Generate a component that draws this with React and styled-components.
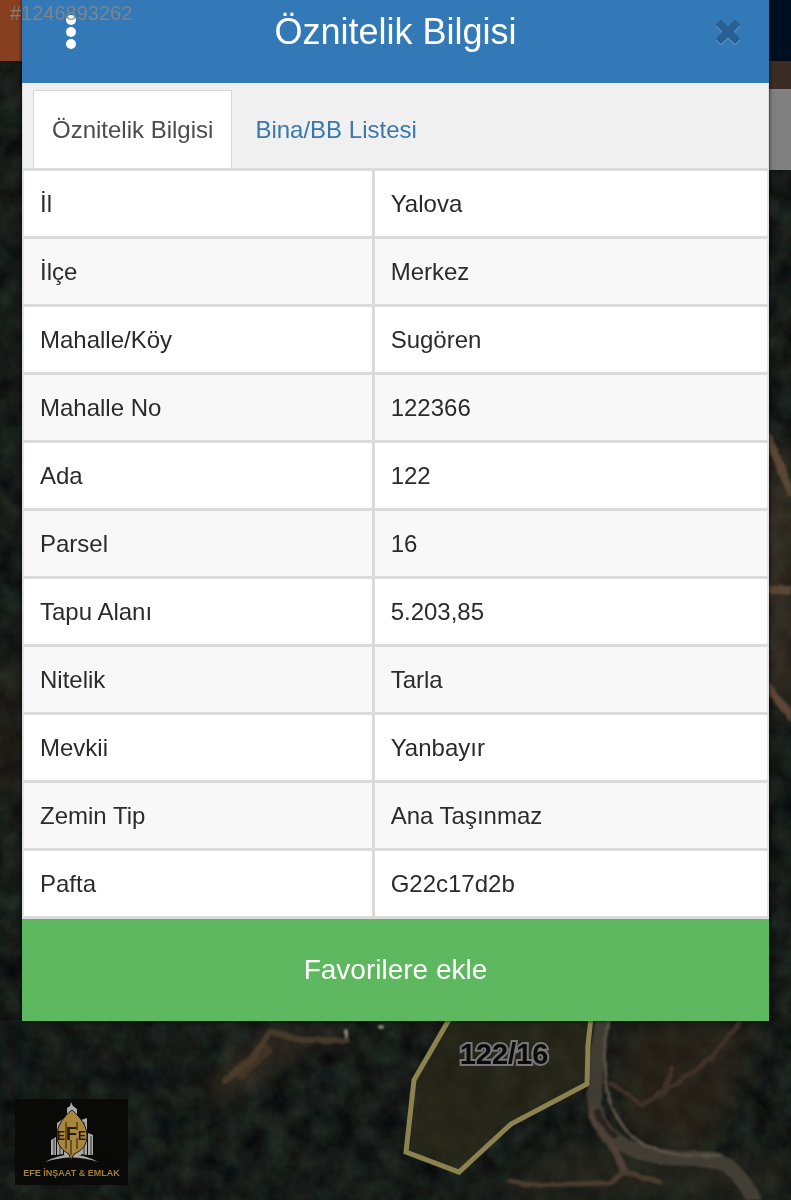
import React, { useState } from "react"
import styled, { createGlobalStyle } from "styled-components"

const GlobalStyle = createGlobalStyle`
  * {
    box-sizing: border-box;
  }
  body {
    margin: 0;
    background: #171b18;
    color: #2b2b2b;
    font-family: "Liberation Sans", Arial, sans-serif;
    font-size: 24px;
  }
`

const Page = styled.div`
  position: relative;
  min-height: 100vh;
  padding: 0 22px;
  overflow: hidden;
`

const Map = styled.svg`
  position: absolute;
  inset: 0;
  width: 100%;
  height: 100%;
`

const Modal = styled.main`
  position: relative;
  background: #fff;
  box-shadow: 0 0 4px rgba(0, 0, 0, .8);
`

const Header = styled.header`
  display: grid;
  grid-template-columns: 98px 1fr 98px;
  align-items: center;
  justify-items: center;
  height: 83px;
  padding-bottom: 19px;
  background: #3379b7;
  color: #fff;
`

const Title = styled.h1`
  margin: 0;
  font-size: 36px;
  line-height: 40px;
  font-weight: 400;
`

const IconButton = styled.button`
  display: flex;
  padding: 0;
  border: none;
  background: none;
  cursor: pointer;
  justify-self: ${p => p.$end ? 'end' : 'center'};
  margin-right: ${p => p.$end ? '26px' : '0'};
`

const Tabs = styled.nav`
  display: flex;
  gap: 4px;
  padding: 7px 10px 0;
  background: #f0f0f0;
  border-left: 1px solid #ddd;
  border-right: 1px solid #ddd;
`

const Tab = styled.button`
  height: 78px;
  padding: 0 18px;
  border: 1px solid ${p => p.$active ? '#d8d8d8' : 'transparent'};
  border-bottom: none;
  background: ${p => p.$active ? '#fff' : 'transparent'};
  color: ${p => p.$active ? '#4c4c4c' : '#3878ad'};
  font: inherit;
  cursor: pointer;
`

const Table = styled.table`
  width: 100%;
  border-collapse: collapse;
  table-layout: fixed;
  tr:nth-child(even) {
    background: #f8f8f8;
  }
  th,
  td {
    height: 68px;
    padding: 0 16px;
    border: 3px solid #dbdbdb;
    font-weight: 400;
    line-height: 32px;
    text-align: left;
  }
  th {
    width: 47%;
    border-left: 2px solid #e2e2e2;
  }
  td {
    border-right: 2px solid #e2e2e2;
  }
`

const AddButton = styled.button`
  display: block;
  width: 100%;
  height: 102px;
  border: none;
  background: #5eb85f;
  color: #fff;
  font: inherit;
  font-size: 28px;
  cursor: pointer;
`

const ListingNo = styled.span`
  position: absolute;
  top: 2px;
  left: 10px;
  color: rgba(145, 135, 128, .8);
  font-size: 20px;
  line-height: 22px;
`

const Agency = styled.figure`
  position: absolute;
  left: 15px;
  bottom: 15px;
  display: flex;
  flex-direction: column;
  align-items: center;
  width: 113px;
  height: 86px;
  margin: 0;
  padding-top: 3px;
  background: rgba(8, 8, 7, .88);
  figcaption {
    margin-top: 4px;
    color: #a17f3c;
    font-size: 9px;
    font-weight: 700;
    line-height: 10px;
    white-space: nowrap;
  }
`

const rows = [
  ['İl', 'Yalova'],
  ['İlçe', 'Merkez'],
  ['Mahalle/Köy', 'Sugören'],
  ['Mahalle No', '122366'],
  ['Ada', '122'],
  ['Parsel', '16'],
  ['Tapu Alanı', '5.203,85'],
  ['Nitelik', 'Tarla'],
  ['Mevkii', 'Yanbayır'],
  ['Zemin Tip', 'Ana Taşınmaz'],
  ['Pafta', 'G22c17d2b'],
]

function Satellite() {
  return (
    <Map viewBox="0 0 791 1200" preserveAspectRatio="xMidYMax slice" aria-hidden="true">
      <defs>
        <filter id="trees" x="0" y="0" width="100%" height="100%" colorInterpolationFilters="sRGB">
          <feTurbulence type="fractalNoise" baseFrequency=".045" numOctaves="4" seed="8" />
          <feColorMatrix values=".05 .14 0 0 -.01  0 .18 0 0 .014  0 .13 .03 0 .013  0 0 0 0 1" />
          <feGaussianBlur stdDeviation=".6" />
        </filter>
        <filter id="soft" x="-30%" y="-30%" width="160%" height="160%">
          <feGaussianBlur stdDeviation="12" />
        </filter>
        <filter id="edge" filterUnits="userSpaceOnUse" x="0" y="0" width="791" height="1200">
          <feTurbulence type="fractalNoise" baseFrequency=".08" numOctaves="2" seed="3" />
          <feDisplacementMap in="SourceGraphic" scale="4" xChannelSelector="R" yChannelSelector="G" />
          <feGaussianBlur stdDeviation="1.2" />
        </filter>
      </defs>
      <rect width="791" height="1200" fill="#161b18" />
      <rect width="791" height="1200" filter="url(#trees)" />
      {/* clearings */}
      <g filter="url(#soft)" opacity=".5">
        <path d="M200 1090L270 1030L350 1032L290 1050L240 1095Z" fill="#54402e" />
        <path d="M620 1020L760 1020L730 1110L700 1150L620 1130Z" fill="#38291f" />
        <path d="M768 430L791 480V720L768 690Z" fill="#6b5137" />
        <path d="M0 660H22V800H0Z" fill="#38291f" />
        <path d="M0 1020H20V1100H0Z" fill="#0b1417" />
        <path d="M570 1140L790 1160V1200H480Z" fill="#332e22" />
      </g>
      <path d="M450 1018L414 1080L406 1152L459 1172L511 1124L587 1084L591 1018Z" fill="#302d1b" opacity=".6" />
      {/* roads */}
      <g fill="none" strokeLinecap="round" filter="url(#edge)">
        <path d="M604 1010C597 1055 592 1095 596 1112C602 1140 640 1158 680 1158C725 1158 738 1164 758 1210" stroke="#48423b" strokeWidth="15" opacity=".85" />
        <path d="M592 1110C592 1132 617 1144 624 1170" stroke="#4e4137" strokeWidth="7" />
        <path d="M609 1015C602 1060 605 1100 618 1118C632 1145 660 1158 720 1156" stroke="#5b5248" strokeWidth="3" />
        <path d="M598 1112C601 1122 608 1130 615 1136" stroke="#2a211b" strokeWidth="6" />
        <path d="M510 1181L525 1185L610 1183L625 1172L660 1182" stroke="#4b3c2e" strokeWidth="5" />
        <path d="M612 1084L642 1105L670 1088L712 1057L740 1022M665 1088L672 1068" stroke="#40302a" strokeWidth="5" />
        <path d="M225 1080L250 1062L270 1032L300 1040L346 1040" stroke="#50402f" strokeWidth="6" opacity=".8" />
        <path d="M240 1072L265 1050" stroke="#4f3d2b" strokeWidth="14" opacity=".6" />
        <path d="M768 437L791 492M768 590H791M768 687L791 716" stroke="#5b4735" strokeWidth="8" />
        <path d="M346 1031V1036M380 1027H382" stroke="#8b8479" strokeWidth="4" />
      </g>
      <path d="M450 1018L414 1080L406 1152L459 1172L511 1124L587 1084L588 1045L591 1018" fill="none" stroke="#8b824f" strokeWidth="5" />
      <text x="504" y="1064" textAnchor="middle" fontFamily="Liberation Sans" fontSize="29" fontWeight="700" fill="#0b0b0b" stroke="#777" strokeWidth="4" paintOrder="stroke">122/16</text>
      <rect width="60" height="61" fill="#86401f" />
      <rect x="731" width="60" height="61" fill="#000f20" />
      <rect x="731" y="61" width="60" height="28" fill="#3b2c25" />
      <rect x="731" y="89" width="60" height="81" fill="#808080" />
    </Map>
  )
}

function AgencyLogo() {
  return (
    <svg width="54" height="62" viewBox="0 0 54 62" aria-hidden="true">
      <g fill="#a9a9aa">
        <path d="M22 12V6L25 4L26 0L28 4L32 7V14H22Z" />
        <path d="M6 53V38L11 35V53ZM12 53V21L18 17V52ZM36 52V18L42 16V53ZM43 53V31L48 33V53ZM19 48H36V53H19Z" />
        <path d="M0 60Q27 45 53 60Q27 51 0 60Z" />
      </g>
      <path d="M9 37V53M15 24V53M39 20V53M46 34V53" stroke="#333" />
      <path d="M27 8C36 16 42 24 42 34C42 44 36 49 29 52L26 58L24 52C17 48 12 43 12 34C12 24 18 15 27 8Z" fill="#aa863d" stroke="#171510" strokeWidth="1" />
      <path d="M21 20V47M32 20V28M32 36V47M26 38V53" stroke="#211a0c" />
      <g fontFamily="Liberation Sans" fontWeight="700" fill="#211a0c">
        <text x="12" y="38" fontSize="12">E</text>
        <text x="21" y="38" fontSize="18">F</text>
        <text x="33" y="38" fontSize="12">E</text>
      </g>
    </svg>
  )
}

export default function App() {
  const [tab, setTab] = useState('info')

  return (
    <Page>
      <GlobalStyle />
      <Satellite />
      <Modal>
        <Header>
          <IconButton aria-label="Menü">
            <svg width="12" height="36" viewBox="0 0 12 36" fill="#fff">
              <circle cx="6" cy="6" r="5" />
              <circle cx="6" cy="18" r="5" />
              <circle cx="6" cy="30" r="5" />
            </svg>
          </IconButton>
          <Title>Öznitelik Bilgisi</Title>
          <IconButton $end aria-label="Kapat">
            <svg width="30" height="30" viewBox="0 0 30 30" strokeLinejoin="round" strokeWidth="2">
              <path d="M8 5L15 12L22 5L26 9L19 16L26 23L22 27L15 20L8 27L4 23L11 16L4 9Z" fill="#6fa2cf" stroke="#6fa2cf" />
              <path d="M8 4L15 11L22 4L26 8L19 15L26 22L22 26L15 19L8 26L4 22L11 15L4 8Z" fill="#286192" stroke="#286192" />
            </svg>
          </IconButton>
        </Header>
        <Tabs>
          <Tab $active={tab === 'info'} onClick={() => setTab('info')}>Öznitelik Bilgisi</Tab>
          <Tab $active={tab === 'list'} onClick={() => setTab('list')}>Bina/BB Listesi</Tab>
        </Tabs>
        <Table>
          <tbody>
            {rows.map(([label, value]) => (
              <tr key={label}>
                <th scope="row">{label}</th>
                <td>{value}</td>
              </tr>
            ))}
          </tbody>
        </Table>
        <AddButton>Favorilere ekle</AddButton>
      </Modal>
      <ListingNo>#1246893262</ListingNo>
      <Agency>
        <AgencyLogo />
        <figcaption>EFE İNŞAAT &amp; EMLAK</figcaption>
      </Agency>
    </Page>
  )
}
